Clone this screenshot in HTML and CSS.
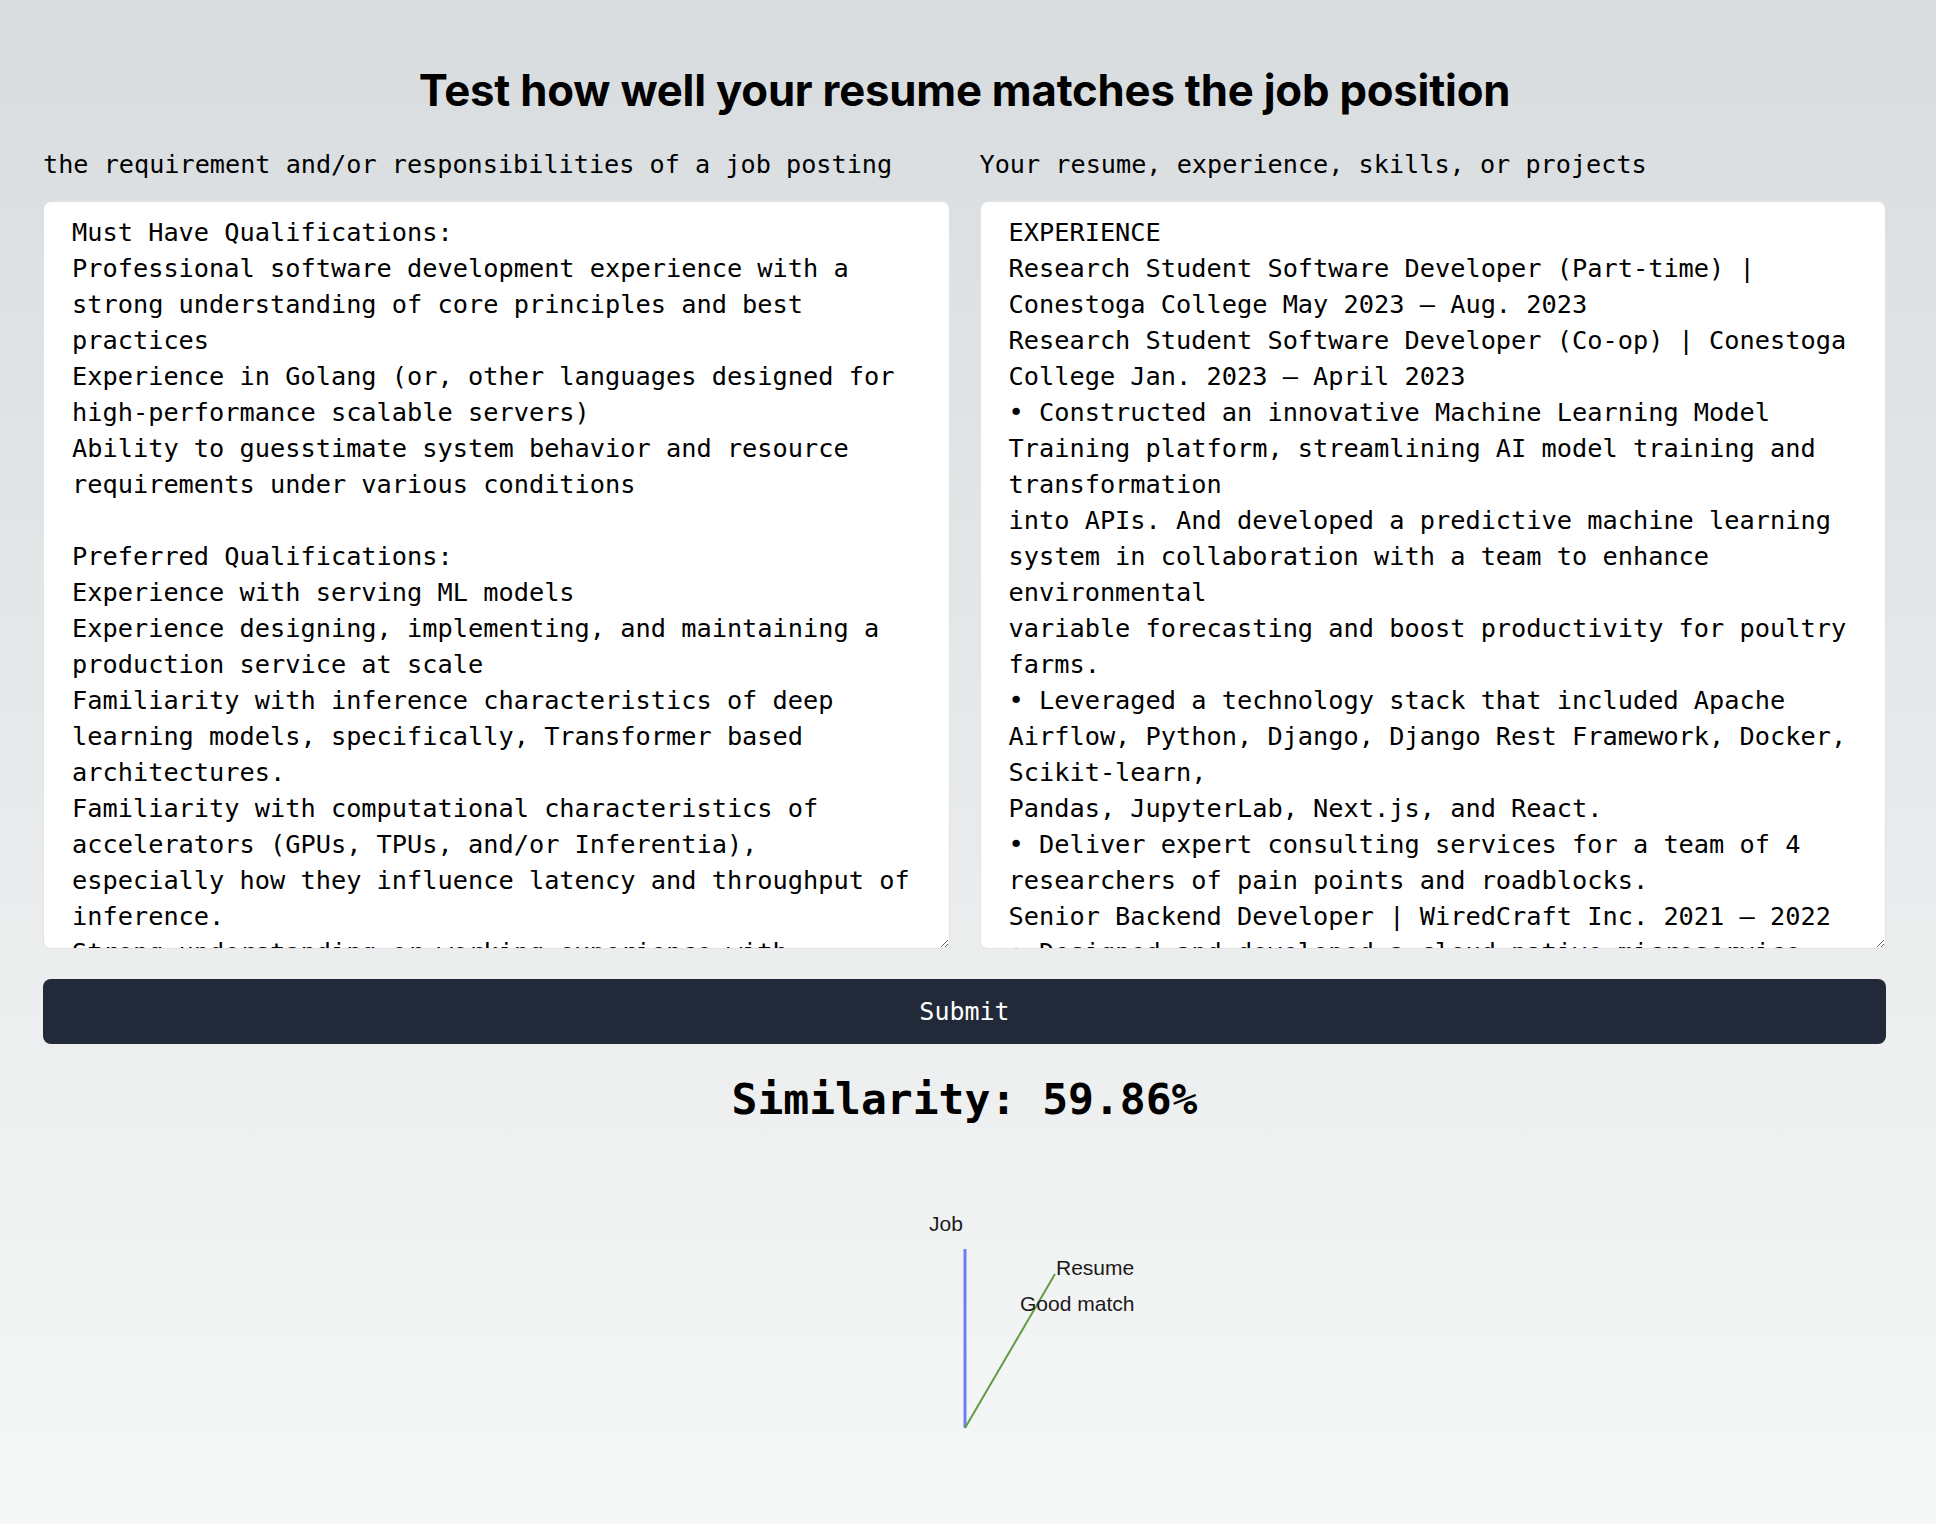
FILE: index.html
```html
<!DOCTYPE html>
<html lang="en">
<head>
<meta charset="utf-8">
<title>Resume Matcher</title>
<link rel="stylesheet" href="styles.css">
</head>
<body>
<main class="page">
  <h1 class="title">Test how well your resume matches the job position</h1>
  <div class="inputs">
    <div class="field">
      <label class="field-label" for="job">the requirement and/or responsibilities of a job posting</label>
      <textarea id="job" class="field-input">Must Have Qualifications:
Professional software development experience with a strong understanding of core principles and best practices
Experience in Golang (or, other languages designed for high-performance scalable servers)
Ability to guesstimate system behavior and resource requirements under various conditions

Preferred Qualifications:
Experience with serving ML models
Experience designing, implementing, and maintaining a production service at scale
Familiarity with inference characteristics of deep learning models, specifically, Transformer based architectures.
Familiarity with computational characteristics of accelerators (GPUs, TPUs, and/or Inferentia), especially how they influence latency and throughput of inference.
Strong understanding or working experience with distributed systems, load balancing, and networking.</textarea>
    </div>
    <div class="field">
      <label class="field-label" for="resume">Your resume, experience, skills, or projects</label>
      <textarea id="resume" class="field-input">EXPERIENCE
Research Student Software Developer (Part-time) | Conestoga College May 2023 – Aug. 2023
Research Student Software Developer (Co-op) | Conestoga College Jan. 2023 – April 2023
• Constructed an innovative Machine Learning Model Training platform, streamlining AI model training and transformation
into APIs. And developed a predictive machine learning system in collaboration with a team to enhance environmental
variable forecasting and boost productivity for poultry farms.
• Leveraged a technology stack that included Apache Airflow, Python, Django, Django Rest Framework, Docker, Scikit-learn,
Pandas, JupyterLab, Next.js, and React.
• Deliver expert consulting services for a team of 4 researchers of pain points and roadblocks.
Senior Backend Developer | WiredCraft Inc. 2021 – 2022
• Designed and developed a cloud-native microservice architecture for client projects.</textarea>
    </div>
  </div>
  <button class="submit" type="button">Submit</button>
  <p class="result">Similarity: 59.86%</p>
  <div class="chart">
    <svg class="chart-svg" width="400" height="250" viewBox="0 0 400 250">
      <line x1="200" y1="59" x2="200" y2="238" stroke="#6e7ef2" stroke-width="3"/>
      <line x1="200" y1="238" x2="290" y2="84" stroke="#629c45" stroke-width="2"/>
      <text class="chart-label" x="164" y="40.5">Job</text>
      <text class="chart-label" x="291" y="84.5">Resume</text>
      <text class="chart-label" x="255" y="120.5">Good match</text>
    </svg>
  </div>
</main>
</body>
</html>
```

FILE: styles.css
```css
html, body {
  margin: 0;
  padding: 0;
}

body {
  min-height: 100vh;
  background: linear-gradient(to bottom, #d8dcde 0%, #f6f7f7 100%);
  color: #000;
  font-family: "DejaVu Sans Mono", "Liberation Mono", monospace;
}

.page {
  padding: 66px 50px 40px 43px;
  display: flex;
  flex-direction: column;
}

.title {
  margin: 0;
  font-family: Inter, "Liberation Sans", sans-serif;
  font-weight: 700;
  font-size: 43.7px;
  line-height: 50px;
  text-align: center;
  letter-spacing: -0.2px;
  color: #000;
}

.inputs {
  margin-top: 31px;
  display: grid;
  grid-template-columns: 1fr 1fr;
  column-gap: 30px;
}

.field {
  display: flex;
  flex-direction: column;
}

.field-label {
  font-size: 25.2px;
  line-height: 36px;
  margin-bottom: 18px;
  color: #000;
}

.field-input {
  box-sizing: border-box;
  height: 748px;
  margin: 0;
  padding: 13px 28px;
  border: 1px solid #e0e2e6;
  border-radius: 8px;
  background: #fff;
  color: #000;
  font-family: "DejaVu Sans Mono", "Liberation Mono", monospace;
  font-size: 25.3px;
  line-height: 36px;
  resize: both;
  scrollbar-width: none;
  outline: none;
}

.field-input::-webkit-scrollbar {
  display: none;
}

.submit {
  margin-top: 30px;
  height: 65px;
  border: 0;
  border-radius: 8px;
  background: #222938;
  color: #fff;
  font-family: "DejaVu Sans Mono", "Liberation Mono", monospace;
  font-size: 25px;
  cursor: pointer;
}

.result {
  margin: 25px 0 0;
  text-align: center;
  font-size: 43px;
  line-height: 60px;
  font-weight: 700;
}

.chart {
  margin-top: 61px;
  display: flex;
  justify-content: center;
}

.chart-svg {
  display: block;
}

.chart-label {
  font-family: "Liberation Sans", Arial, sans-serif;
  font-size: 21px;
  fill: #1a1a1a;
}
```
